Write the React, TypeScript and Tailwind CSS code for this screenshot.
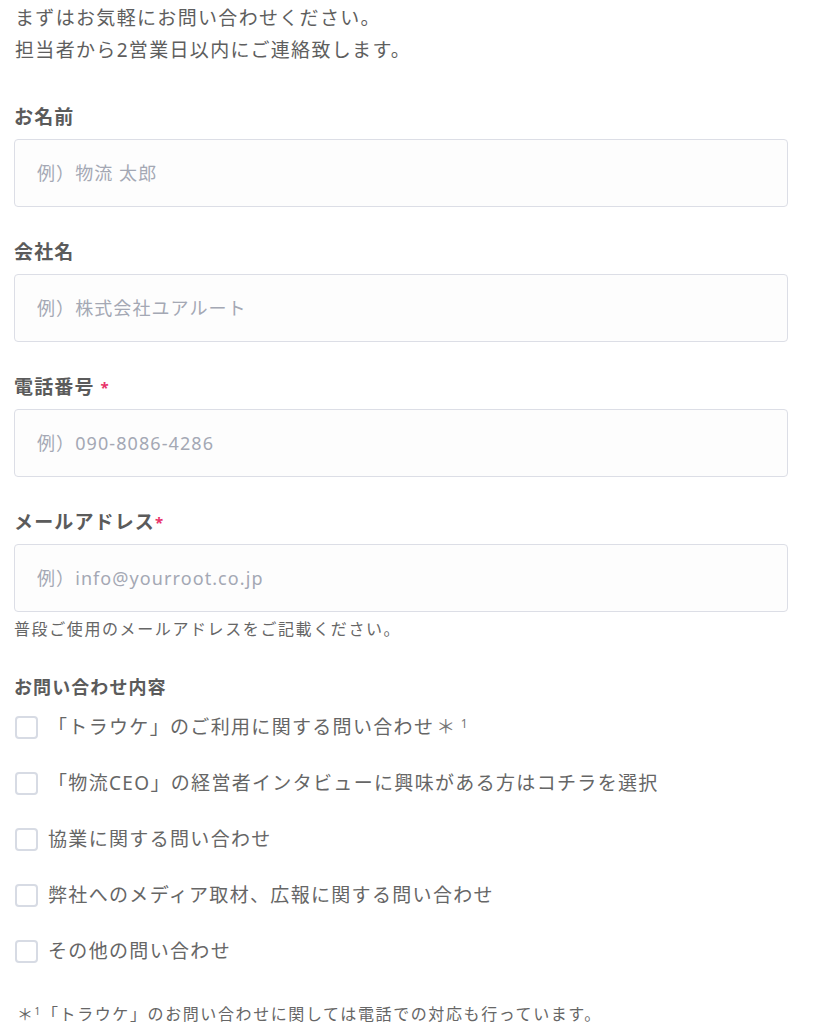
import { useState } from 'react';

const fields = [
    { label: '会社名', placeholder: '例）株式会社ユアルート', type: 'text', required: false },
];

const topics = [
    { id: 'trauke', text: '「トラウケ」のご利用に関する問い合わせ', note: true },
    { id: 'ceo', text: '「物流CEO」の経営者インタビューに興味がある方はコチラを選択', note: false },
    { id: 'biz', text: '協業に関する問い合わせ', note: false },
    { id: 'media', text: '弊社へのメディア取材、広報に関する問い合わせ', note: false },
    { id: 'other', text: 'その他の問い合わせ', note: false },
];

function Field({ label, placeholder, type = 'text', star, tight }: { label: string; placeholder: string; type?: string; star?: boolean; tight?: boolean }) {
    return (
        <div className="flex flex-col">
            <label className="text-[19px] leading-[24px] font-bold text-[#5b5b5b] tracking-[0.06em] mb-[10px]">
                {label}
                {star && <span className={`text-[#e8336a] text-[15px] align-top ${tight ? 'ml-0' : 'ml-[6px]'}`}>*</span>}
            </label>
            <input
                type={type}
                placeholder={placeholder}
                className="w-full h-[68px] pl-[22px] pr-4 bg-[#fdfdfd] border border-[#dcdee6] rounded-[4px] text-[18px] tracking-[0.06em] text-[#555] placeholder:text-[#a4a8b4] focus:outline-none"
            />
        </div>
    );
}

export default function App() {
    const [checked, setChecked] = useState<Record<string, boolean>>({});

    return (
        <div className="min-h-screen bg-white font-['Noto_Sans','Noto_Sans_CJK_JP',sans-serif] text-[#666]">
            <div className="w-[788px] pl-[14px] pt-[2px] pb-10">
                <p className="text-[19px] leading-[32px] tracking-[0.07em] text-[#5e5e5e] pl-px">
                    まずはお気軽にお問い合わせください。
                    <br />
                    担当者から2営業日以内にご連絡致します。
                </p>

                <div className="mt-[39px] flex flex-col gap-[33px]">
                    <Field label="お名前" placeholder="例）物流 太郎" />
                    {fields.map((f) => (
                        <Field key={f.label} label={f.label} placeholder={f.placeholder} type={f.type} />
                    ))}
                    <Field label="電話番号" placeholder="例）090-8086-4286" type="tel" star />
                    <div>
                        <Field label="メールアドレス" placeholder="例）info@yourroot.co.jp" type="email" star tight />
                        <p className="mt-[5px] text-[16px] leading-[24px] tracking-[0.1em] text-[#666]">
                            普段ご使用のメールアドレスをご記載ください。
                        </p>
                    </div>
                </div>

                <p className="mt-[34px] text-[18px] leading-[24px] font-bold tracking-[0.06em] text-[#5b5b5b]">お問い合わせ内容</p>

                <div className="flex flex-col">
                    {topics.map((t) => (
                        <label key={t.id} className="h-[56px] flex items-center gap-[10px] cursor-pointer">
                            <input
                                type="checkbox"
                                checked={!!checked[t.id]}
                                onChange={(e) => setChecked({ ...checked, [t.id]: e.target.checked })}
                                className="appearance-none w-[23px] h-[23px] ml-px border-2 border-[#d7dbe4] rounded-[4px] bg-white shrink-0 checked:bg-[#e8336a] checked:border-[#e8336a]"
                            />
                            <span className="text-[19px] leading-[24px] tracking-[0.07em] text-[#666]">
                                {t.text}
                                {t.note && (
                                    <span className="ml-[2px] text-[#777]">
                                        ＊<sup className="text-[12px] ml-[4px]">1</sup>
                                    </span>
                                )}
                            </span>
                        </label>
                    ))}
                </div>

                <p className="mt-[23px] text-[16px] leading-[24px] tracking-[0.1em] text-[#666] pl-[3px]">
                    ＊<sup className="text-[10px]">1</sup>「トラウケ」のお問い合わせに関しては電話での対応も行っています。
                </p>
            </div>
        </div>
    );
}
